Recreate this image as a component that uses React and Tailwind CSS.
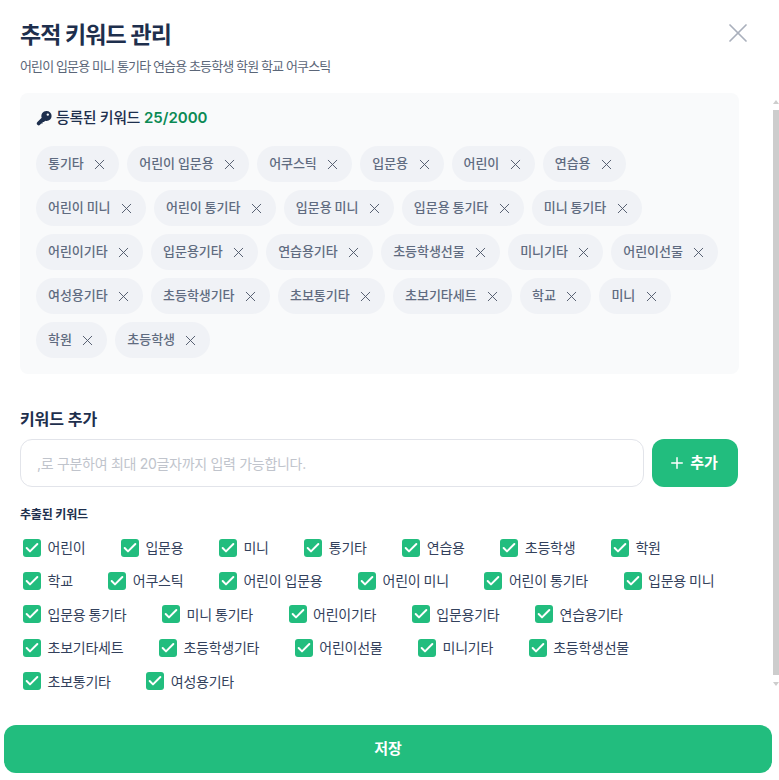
import React from 'react';
import { X, Plus, Check } from 'lucide-react';

const REGISTERED = [
  '통기타', '어린이 입문용', '어쿠스틱', '입문용', '어린이', '연습용',
  '어린이 미니', '어린이 통기타', '입문용 미니', '입문용 통기타', '미니 통기타',
  '어린이기타', '입문용기타', '연습용기타', '초등학생선물', '미니기타', '어린이선물',
  '여성용기타', '초등학생기타', '초보통기타', '초보기타세트', '학교', '미니',
  '학원', '초등학생',
];

const EXTRACTED = [
  '어린이', '입문용', '미니', '통기타', '연습용', '초등학생', '학원',
  '학교', '어쿠스틱', '어린이 입문용', '어린이 미니', '어린이 통기타', '입문용 미니',
  '입문용 통기타', '미니 통기타', '어린이기타', '입문용기타', '연습용기타',
  '초보기타세트', '초등학생기타', '어린이선물', '미니기타', '초등학생선물',
  '초보통기타', '여성용기타',
];

function KeyIcon() {
  return (
    <svg viewBox="0 0 16 16" className="w-[16px] h-[16px] text-[#1e2f4d]" fill="currentColor">
      <path
        fillRule="evenodd"
        d="M10.6 1a5 5 0 0 1 0 10c-.5 0-1-.1-1.4-.2L8 12H6.6v1.5H5.2L4 14.7a1.8 1.8 0 0 1-2.6 0 1.8 1.8 0 0 1 0-2.6l4.3-4.3A5 5 0 0 1 10.6 1zm1.2 2.4a1.2 1.2 0 1 0 0 2.4 1.2 1.2 0 0 0 0-2.4z"
      />
    </svg>
  );
}

export default function App() {
  return (
    <div className="relative w-[779px] h-[780px] bg-white overflow-hidden font-['Inter','Noto_Sans_CJK_KR',sans-serif] text-[#1e2f4d]">
      {/* Header */}
      <div className="flex justify-between pl-[20px] pr-[25px] pt-[18px]">
        <div>
          <h2 className="text-[23px] leading-[34px] font-bold tracking-[-0.9px]">추적 키워드 관리</h2>
          <p className="mt-[5px] text-[13px] leading-[18px] text-[#5b6678] tracking-[-0.88px]">
            어린이 입문용 미니 통기타 연습용 초등학생 학원 학교 어쿠스틱
          </p>
        </div>
        <X className="w-[32px] h-[32px] -mt-[1px] text-[#aab0bc]" strokeWidth={1.3} absoluteStrokeWidth />
      </div>

      {/* Registered keywords */}
      <div className="mx-[20px] mt-[18px] w-[719px] h-[281px] rounded-lg bg-[#f9fafb] p-[16px]">
        <div className="flex items-center gap-[4px] h-[18px] text-[15px] font-medium">
          <KeyIcon />
          <span className="tracking-[-0.4px]">등록된 키워드</span>
          <span className="font-semibold text-[#0c8a55]">25/2000</span>
        </div>
        <div className="mt-[19px] flex flex-wrap gap-x-[8px] gap-y-[8px]">
          {REGISTERED.map((k) => (
            <span key={k} className="flex items-center h-[36px] pl-[12px] pr-[11px] rounded-full bg-[#f0f2f6] text-[13px] font-medium text-[#5f6b80] tracking-[-0.05px] [word-spacing:-0.5px]">
              {k}
              <X className="ml-[7.5px] w-[17px] h-[17px] text-[#4b5568]" strokeWidth={1.3} absoluteStrokeWidth />
            </span>
          ))}
        </div>
      </div>

      {/* Add keyword */}
      <div className="pl-[20px] pr-[41px] mt-[33px]">
        <h3 className="text-[16px] leading-[24px] font-semibold tracking-[-0.1px]">키워드 추가</h3>
        <div className="mt-[8px] flex gap-[8px]">
          <input
            readOnly
            placeholder=",로 구분하여 최대 20글자까지 입력 가능합니다."
            className="flex-1 h-[48px] px-[16px] rounded-xl border border-[#e2e4ea] bg-white text-[14px] tracking-[-0.3px] placeholder:text-[#c0c4cc] outline-none"
          />
          <button className="w-[86px] h-[48px] flex items-center justify-center gap-[4px] pr-[4px] rounded-xl bg-[#22bd7e] text-white text-[15px] font-semibold">
            <Plus className="w-[18px] h-[18px]" strokeWidth={2} />
            추가
          </button>
        </div>

        <div className="mt-[19px] text-[12px] leading-[18px] font-semibold tracking-[-0.2px]">추출된 키워드</div>
        <div className="mt-[14.5px] flex flex-wrap gap-x-[35.6px] gap-y-[15.4px] pl-[3px] pr-[20px]">
          {EXTRACTED.map((k) => (
            <label key={k} className="flex items-center gap-[6.5px] h-[18px] text-[14px] text-[#33415c] tracking-[-0.25px] [word-spacing:-0.5px]">
              <span className="flex items-center justify-center w-[18px] h-[18px] rounded-[3px] bg-[#22bd7e]">
                <Check className="w-[16px] h-[16px] text-white" strokeWidth={3} />
              </span>
              {k}
            </label>
          ))}
        </div>
      </div>

      {/* Scrollbar */}
      <div className="absolute right-0 top-[110px] w-[6px] h-[565px] bg-[#cdcdcd]" />
      <div className="absolute right-0 top-[100px] w-0 h-0 border-x-[3px] border-x-transparent border-b-[4px] border-b-[#cdcdcd]" />
      <div className="absolute right-0 top-[682px] w-0 h-0 border-x-[3px] border-x-transparent border-t-[4px] border-t-[#cdcdcd]" />

      {/* Save */}
      <button className="absolute left-[4px] top-[725px] w-[768px] h-[48px] rounded-xl bg-[#22bd7e] text-white text-[15px] font-semibold">
        저장
      </button>
    </div>
  );
}
